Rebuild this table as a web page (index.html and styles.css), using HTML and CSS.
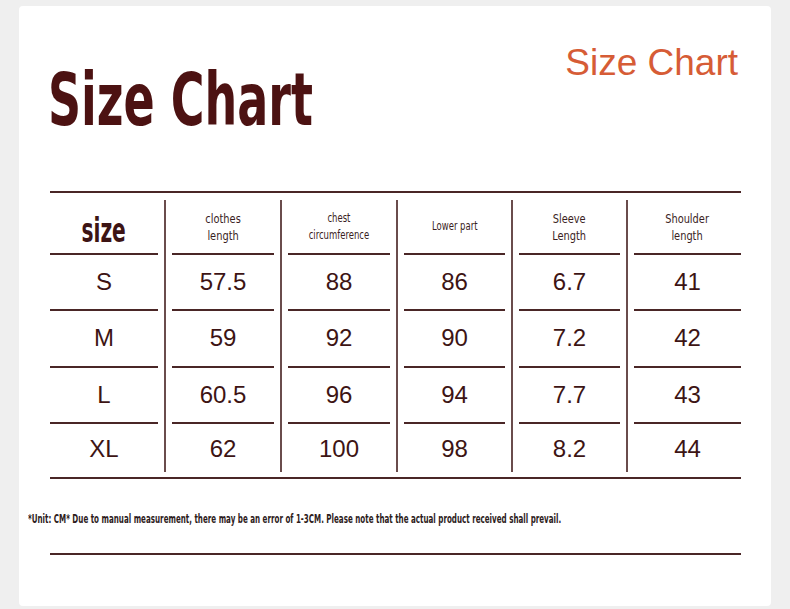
FILE: index.html
```html
<!DOCTYPE html>
<html>
<head>
<meta charset="utf-8">
<link rel="stylesheet" href="styles.css">
</head>
<body>
<div class="card">
  <div class="head">
    <h1 class="title"><span class="squeeze">Size Chart</span></h1>
    <div class="tag">Size Chart</div>
  </div>
  <div class="table">
    <div class="col first">
      <div class="cell hd"><span class="size-label">size</span></div>
      <div class="cell">S</div>
      <div class="cell r2">M</div>
      <div class="cell">L</div>
      <div class="cell last">XL</div>
    </div>
    <div class="col">
      <div class="cell hd"><span class="lbl">clothes<br>length</span></div>
      <div class="cell">57.5</div>
      <div class="cell r2">59</div>
      <div class="cell">60.5</div>
      <div class="cell last">62</div>
    </div>
    <div class="col">
      <div class="cell hd"><span class="lbl sm">chest<br>circumference</span></div>
      <div class="cell">88</div>
      <div class="cell r2">92</div>
      <div class="cell">96</div>
      <div class="cell last">100</div>
    </div>
    <div class="col">
      <div class="cell hd"><span class="lbl sm">Lower part</span></div>
      <div class="cell">86</div>
      <div class="cell r2">90</div>
      <div class="cell">94</div>
      <div class="cell last">98</div>
    </div>
    <div class="col">
      <div class="cell hd"><span class="lbl">Sleeve<br>Length</span></div>
      <div class="cell">6.7</div>
      <div class="cell r2">7.2</div>
      <div class="cell">7.7</div>
      <div class="cell last">8.2</div>
    </div>
    <div class="col end">
      <div class="cell hd"><span class="lbl">Shoulder<br>length</span></div>
      <div class="cell">41</div>
      <div class="cell r2">42</div>
      <div class="cell">43</div>
      <div class="cell last">44</div>
    </div>
  </div>
  <p class="note"><span class="note-text">*Unit: CM* Due to manual measurement, there may be an error of 1-3CM. Please note that the actual product received shall prevail.</span></p>
  <div class="rule"></div>
</div>
</body>
</html>
```
FILE: styles.css
```css
* { box-sizing: border-box; }
html, body { margin: 0; padding: 0; }
body {
  background: #efefef;
  padding: 6px 19px 3px 19px;
  font-family: "Liberation Sans", Arial, sans-serif;
}
.card {
  width: 752px;
  height: 600px;
  background: #fff;
  border-radius: 4px;
  overflow: hidden;
}
.head {
  height: 185px;
  display: flex;
  justify-content: space-between;
  align-items: flex-start;
  padding: 38px 33px 0 29px;
}
.title {
  margin: 19px 0 0 0;
  font-family: "DejaVu Sans Condensed", "DejaVu Sans", sans-serif;
  font-weight: 700;
  font-size: 73px;
  line-height: 73px;
  color: #4c1212;
  white-space: nowrap;
  width: 270px;
}
.squeeze {
  display: inline-block;
  transform: scaleX(0.70);
  transform-origin: left center;
}
.tag {
  font-family: "Liberation Sans", Arial, sans-serif;
  font-size: 37px;
  line-height: 37px;
  color: #d65c36;
}
.table {
  margin: 0 30px 0 31px;
  border-top: 2px solid #4a2626;
  border-bottom: 2px solid #4a2626;
  padding: 7px 0 5px 0;
  display: grid;
  grid-template-columns: 114px 116px 116px 115px 115px 115px;
}
.col {
  display: flex;
  flex-direction: column;
  padding: 0 6px;
  border-left: 2px solid #6a4c4c;
}
.col.first { border-left: 0; padding-left: 0; padding-right: 6px; }
.col.end { padding-right: 0; }
.cell {
  height: 56px;
  border-bottom: 2px solid #4a2626;
  display: flex;
  align-items: center;
  justify-content: center;
  font-size: 24px;
  color: #3d1414;
  padding-bottom: 1px;
}
.cell.r2 { height: 57px; }
.cell.hd { height: 55px; padding-bottom: 0; }
.cell.last { height: 48px; border-bottom: 0; padding-top: 3px; }
.size-label {
  display: inline-block;
  font-family: "DejaVu Sans Condensed", "DejaVu Sans", sans-serif;
  font-weight: 700;
  font-size: 33px;
  line-height: 33px;
  color: #3d1414;
  padding-top: 8px;
  transform: scaleX(0.68);
}
.lbl {
  display: inline-block;
  font-family: "DejaVu Sans Condensed", "DejaVu Sans", sans-serif;
  font-size: 13px;
  line-height: 17px;
  color: #3a1e1e;
  text-align: center;
  white-space: nowrap;
  transform: scaleX(0.84);
}
.lbl.sm { font-size: 11.5px; line-height: 17px; transform: scaleX(0.82); }
.note {
  margin: 30px 0 0 9px;
  height: 14px;
  white-space: nowrap;
}
.note-text {
  display: inline-block;
  font-family: "DejaVu Sans Condensed", "DejaVu Sans", sans-serif;
  font-weight: 700;
  font-size: 11.5px;
  line-height: 14px;
  color: #2e1c1c;
  transform: scaleX(0.69);
  transform-origin: left center;
}
.rule {
  margin: 30px 30px 0 31px;
  border-top: 2px solid #4a2626;
}
```
